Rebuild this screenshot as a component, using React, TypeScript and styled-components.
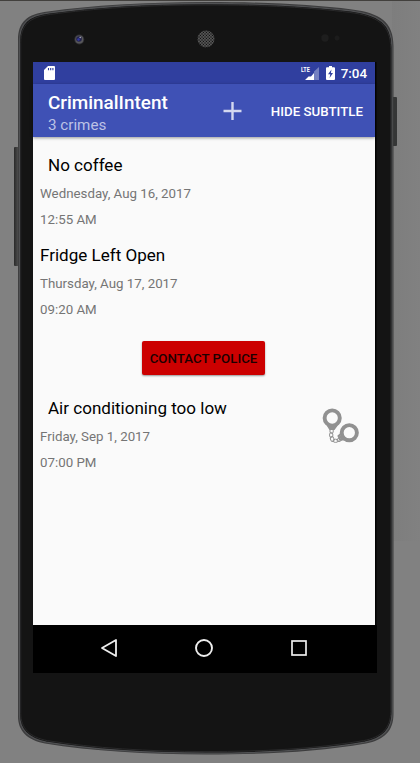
import React from "react";
import styled, { createGlobalStyle } from "styled-components";

const GlobalStyle = createGlobalStyle`
  * { box-sizing: border-box; }
  body { margin: 0; background: #818181; overflow: hidden; font-family: Roboto, "Liberation Sans", sans-serif; }
`;

const Desk = styled.main`
  position: relative;
  width: 420px;
  height: 763px;
  padding: 61px 0 0 33px;
  overflow: hidden;
  background: #818181;
  border-top: 1px solid #42403d;
`;

const DeviceArt = styled.svg`
  position: absolute;
  left: 0;
  top: -1px;
`;

const Screen = styled.section`
  position: relative;
  width: 342px;
  height: 611px;
  display: flex;
  flex-direction: column;
  background: #fafafa;
`;

const StatusBar = styled.div`
  height: 22px;
  flex: none;
  display: flex;
  align-items: center;
  padding: 0 8px 0 11px;
  background: #303f9f;
  color: #fff;
`;

const StatusRight = styled.div`
  margin-left: auto;
  display: flex;
  align-items: center;
`;

const Clock = styled.span`
  font-size: 13.4px;
  font-weight: 500;
  line-height: 22px;
  margin-left: 6px;
  padding-top: 1px;
`;

const Toolbar = styled.header`
  height: 53px;
  flex: none;
  display: flex;
  align-items: center;
  padding: 0 12px 0 15px;
  background: #3f51b5;
  color: #fff;
  box-shadow: 0 1px 3px rgba(0, 0, 0, 0.4);
`;

const Heading = styled.div`
  width: 175px;
  padding-top: 5px;
`;

const AppTitle = styled.h1`
  margin: 0;
  font-size: 18.9px;
  font-weight: 500;
  line-height: 23px;
`;

const Subtitle = styled.div`
  font-size: 15.2px;
  line-height: 22px;
  color: #bcc2e5;
`;

const BarButton = styled.button`
  border: 0;
  padding: 2px 0 0;
  background: none;
  color: #fff;
  font: 500 13.3px/20px Roboto, sans-serif;
  white-space: nowrap;
  margin-left: auto;
`;

const CrimeList = styled.div`
  flex: 1;
  padding: 15px 7px 0;
`;

const CrimeRow = styled.article<{ $gap: number }>`
  display: flex;
  justify-content: space-between;
  margin-bottom: ${(p) => p.$gap}px;
`;

const CrimeTitle = styled.h2<{ $indent?: boolean }>`
  margin: 0 0 3px;
  padding-left: ${(p) => (p.$indent ? 8 : 0)}px;
  font-size: 17.05px;
  font-weight: 400;
  line-height: 26px;
  color: #000;
`;

const CrimeMeta = styled.div`
  font-size: 13.3px;
  line-height: 26px;
  color: #757575;
`;

const Details = styled.div`
  display: flex;
  flex-direction: column;
`;

const PoliceButton = styled.button`
  display: block;
  width: 123px;
  height: 34px;
  margin: 0 0 20px 102px;
  padding: 1px 0 0;
  border: 0;
  border-radius: 2px;
  background: #cc0000;
  color: #1c0000;
  font: 500 13.3px/33px Roboto, sans-serif;
  white-space: nowrap;
  box-shadow: 0 1px 2px rgba(0, 0, 0, 0.4);
`;

const Cuffs = styled.svg`
  margin: 13px 8px 0 0;
  flex: none;
`;

const NavBar = styled.nav`
  height: 48px;
  width: 344px;
  flex: none;
  display: flex;
  align-items: center;
  justify-content: center;
  gap: 75px;
  padding: 0 2px 2px 0;
  background: #000;
`;

const bodyPath =
  "M18 40 C18 22 27 14 48 11.500 C92 5.500 145 2 206 2 C267 2 312 4.500 352 9.500 C380 13 393.500 22 393.500 46 V714 C393.500 731 384 740 366 743.500 C315 752 265 754.500 206 754.500 C147 754.500 92 751 45 743.500 C27 740 18 731 18 716 Z";

const DevicePicture = () => (
  <DeviceArt width="420" height="763" viewBox="0 0 420 763" aria-hidden="true">
    <defs>
      <linearGradient id="side" x1="0" x2="1">
        <stop offset="0" stopColor="#292929" />
        <stop offset="1" stopColor="#555" />
      </linearGradient>
      <linearGradient id="shade" x1="0" x2="1">
        <stop offset="0" stopColor="#7a7a7a" />
        <stop offset="1" stopColor="#818181" />
      </linearGradient>
      <pattern id="grille" width="3" height="3" patternUnits="userSpaceOnUse">
        <rect width="3" height="3" fill="#555" />
        <circle cx="1" cy="1" r=".75" fill="#111" />
        <circle cx="2.500" cy="2.500" r=".7" fill="#111" />
      </pattern>
    </defs>
    <rect x="392" y="1" width="28" height="540" fill="url(#shade)" opacity=".5" />
    <rect x="14" y="147" width="5" height="119" rx="1" fill="url(#side)" />
    <rect x="392" y="97" width="5" height="49" rx="1" fill="#353636" />
    <path d={bodyPath} fill="#3c3c3d" />
    <path d={bodyPath} fill="#141414" stroke="#505153" strokeWidth="1.300" transform="translate(1.600 1.500) scale(.9923 .9962)" />
    <path d={bodyPath} fill="#141414" stroke="#29292a" strokeWidth="1" transform="translate(3 3) scale(.9854 .9921)" />
    <circle cx="79.300" cy="39.500" r="5" fill="#303033" />
    <circle cx="79.300" cy="39.500" r="4" fill="#58585b" />
    <circle cx="79" cy="39" r="2.800" fill="#23234d" />
    <circle cx="78.500" cy="39.500" r="1.200" fill="#3439a5" />
    <circle cx="80.200" cy="37.500" r=".8" fill="#aaaab8" />
    <circle cx="206" cy="39" r="8.500" fill="url(#grille)" />
    <circle cx="325" cy="38" r="3.700" fill="#1e1e1e" />
    <circle cx="337" cy="38" r="2.500" fill="#1c1c1c" />
    <path d="M375 62h1.500v611H375z" fill="#030303" />
  </DeviceArt>
);

const SdCard = () => (
  <svg width="11" height="14" viewBox="0 0 11 14">
    <path d="M4 0h6q1 0 1 1v12q0 1-1 1H1q-1 0-1-1V4z" fill="#fff" />
    <path d="M4.500 2v2.300M6.700 2v2.300M8.900 2v2.300" stroke="#303f9f" strokeWidth="1.100" />
  </svg>
);

const LteText = styled.span`
  font: 700 8px/8px Roboto, sans-serif;
  transform: scaleX(0.68);
  transform-origin: left top;
  width: 9px;
  align-self: flex-start;
  margin: 4px -5px 0 0;
  position: relative;
`;

const Signal = () => (
  <svg width="14" height="13" viewBox="0 0 14 13">
    <path d="M14 0V13H9V4.600z" fill="#7580c0" />
    <path d="M0 13 3.500 9.500H6L9 6V13z" fill="#fff" />
  </svg>
);

const BatteryIcon = styled.svg`
  margin-left: 7px;
`;

const PlusIcon = () => (
  <svg width="20" height="20" viewBox="0 0 20 20">
    <path d="M9.500 1v18M.5 10h18" stroke="#d4d8f0" strokeWidth="2.400" />
  </svg>
);

const HandcuffIcon = () => (
  <Cuffs width="38" height="36" viewBox="0 0 38 36" fill="none" stroke="#919191">
    <circle cx="10.200" cy="10" r="7.600" strokeWidth="3.900" />
    <circle cx="27.300" cy="24.700" r="7.600" strokeWidth="3.900" />
    <path d="M5.500 17 8 21h4l3-4M20.500 24.500l-4 3.500 1.500 3.500h6" strokeWidth="2" />
    <path d="m7.500 18 1.500 1.500h3l1-2M18 28l2 3" strokeWidth="1.800" />
    <ellipse cx="9.600" cy="23" rx="1.700" ry="2.500" strokeWidth="1" />
    <ellipse cx="9.200" cy="27" rx="1.700" ry="2.500" strokeWidth="1" />
    <ellipse cx="10.200" cy="31" rx="1.700" ry="2.500" strokeWidth="1" transform="rotate(-20 10.200 31)" />
    <ellipse cx="13.600" cy="32.800" rx="2.600" ry="1.600" strokeWidth="1" />
    <ellipse cx="17.500" cy="31.600" rx="2.500" ry="1.600" strokeWidth="1" transform="rotate(-25 17.500 31.600)" />
  </Cuffs>
);

type CrimeProps = { title: string; date: string; time: string; indent?: boolean; cuffs?: boolean; gap: number };

const Crime = ({ title, date, time, indent, cuffs, gap }: CrimeProps) => (
  <CrimeRow $gap={gap}>
    <Details>
      <CrimeTitle $indent={indent}>{title}</CrimeTitle>
      <CrimeMeta>{date}</CrimeMeta>
      <CrimeMeta>{time}</CrimeMeta>
    </Details>
    {cuffs && <HandcuffIcon />}
  </CrimeRow>
);

export default function App() {
  return (
    <Desk>
      <GlobalStyle />
      <DevicePicture />
      <Screen>
        <StatusBar>
          <SdCard />
          <StatusRight>
            <LteText>LTE</LteText>
            <Signal />
            <BatteryIcon width="9" height="14" viewBox="0 0 9 14">
              <path d="M3 0h3v1.300h2q1 0 1 1V13q0 1-1 1H1q-1 0-1-1V2.300q0-1 1-1h2z" fill="#fff" />
              <path d="M5.500 3.500 2 8.300h2.300L3.600 12 7 7H4.900z" fill="#303f9f" />
            </BatteryIcon>
            <Clock>7:04</Clock>
          </StatusRight>
        </StatusBar>
        <Toolbar>
          <Heading>
            <AppTitle>CriminalIntent</AppTitle>
            <Subtitle>3 crimes</Subtitle>
          </Heading>
          <PlusIcon />
          <BarButton>HIDE SUBTITLE</BarButton>
        </Toolbar>
        <CrimeList>
          <Crime title="No coffee" date="Wednesday, Aug 16, 2017" time="12:55 AM" indent gap={9} />
          <Crime title="Fridge Left Open" date="Thursday, Aug 17, 2017" time="09:20 AM" gap={18} />
          <PoliceButton>CONTACT POLICE</PoliceButton>
          <Crime title="Air conditioning too low" date="Friday, Sep 1, 2017" time="07:00 PM" indent cuffs gap={0} />
        </CrimeList>
        <NavBar>
          <svg width="20" height="20" viewBox="0 0 20 20">
            <path d="M17 2v16L3 10z" fill="none" stroke="#eee" strokeWidth="1.800" strokeLinejoin="round" />
          </svg>
          <svg width="20" height="20" viewBox="0 0 20 20">
            <circle cx="10" cy="10" r="8" fill="none" stroke="#eee" strokeWidth="1.900" />
          </svg>
          <svg width="20" height="20" viewBox="0 0 20 20">
            <rect x="3" y="3" width="14" height="14" fill="none" stroke="#eee" strokeWidth="1.700" />
          </svg>
        </NavBar>
      </Screen>
    </Desk>
  );
}
